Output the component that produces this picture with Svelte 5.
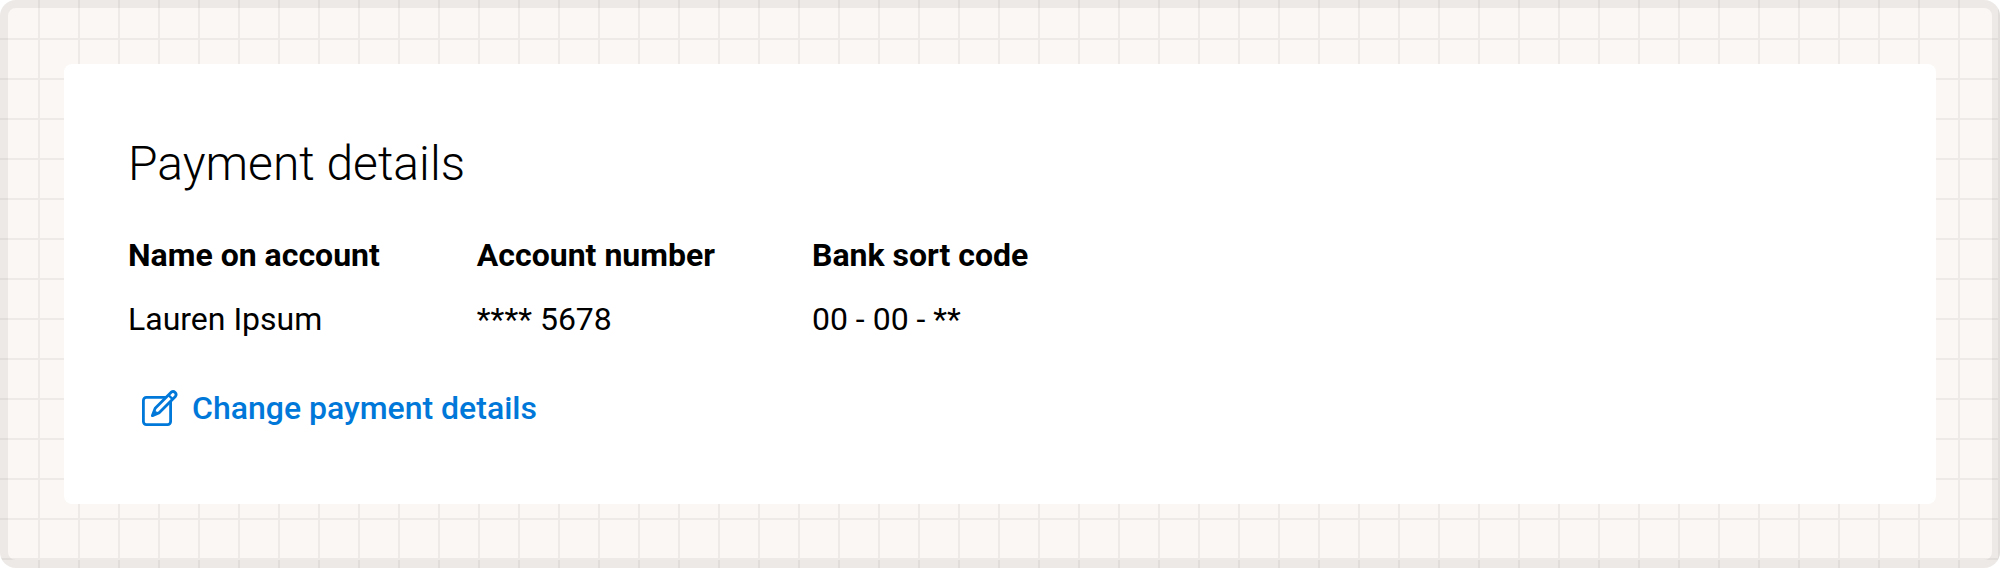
<script>
  const account = [
    { label: 'Name on account', value: 'Lauren Ipsum' },
    { label: 'Account number', value: '**** 5678' },
    { label: 'Bank sort code', value: '00 - 00 - **' }
  ];
</script>

<main class="canvas">
  <section class="card" aria-labelledby="payment-title">
    <h2 id="payment-title">Payment details</h2>
    <table>
      <thead>
        <tr>
          {#each account as field}
            <th scope="col">{field.label}</th>
          {/each}
        </tr>
      </thead>
      <tbody>
        <tr>
          {#each account as field}
            <td>{field.value}</td>
          {/each}
        </tr>
      </tbody>
    </table>
    <button type="button" class="change">
      <svg viewBox="0 0 40 40" width="40" height="40" fill="none" stroke="currentColor" stroke-width="2.8" stroke-linejoin="round" aria-hidden="true">
        <path d="M26 9.400H6.400a3 3 0 0 0-3 3v21.200a3 3 0 0 0 3 3h21.200a3 3 0 0 0 3-3V14" />
        <path d="M12.400 27.600L15.200 20.200L31.200 4.200a3 3 0 0 1 4.200 4.200L19.400 24.600z" />
        <path d="M28.400 7L32.600 11.200" stroke-width="2.400" />
        <path d="M12.400 27.600L16.500 23.500" stroke-width="2" />
      </svg>
      <span>Change payment details</span>
    </button>
  </section>
</main>

<style>
  .canvas {
    box-sizing: border-box;
    padding: 56px;
    border: 8px solid rgba(0, 0, 0, 0.055);
    border-radius: 16px;
    background-color: #fbf7f4;
    background-image:
      linear-gradient(to right, transparent 38px, #eeeae7 38px),
      linear-gradient(to bottom, transparent 38px, #eeeae7 38px);
    background-size: 40px 40px;
    background-origin: border-box;
    font-family: Roboto, sans-serif;
    font-size: 32px;
    line-height: 48px;
    color: #000;
  }

  .card {
    padding: 64px;
    border-radius: 8px;
    background: #fff;
  }

  h2 {
    margin: 0 0 23px;
    font-size: 48px;
    font-weight: 300;
    line-height: 72px;
  }

  table {
    border-collapse: collapse;
    margin-bottom: 25px;
  }

  th,
  td {
    padding: 8px 97px 8px 0;
    text-align: left;
  }

  th {
    font-weight: 700;
  }

  td {
    font-weight: 400;
  }

  .change {
    display: flex;
    align-items: center;
    gap: 12px;
    padding: 8px 12px;
    border: 0;
    border-radius: 8px;
    background: none;
    color: #0078d9;
    font: inherit;
    font-weight: 500;
    cursor: pointer;
  }
</style>
